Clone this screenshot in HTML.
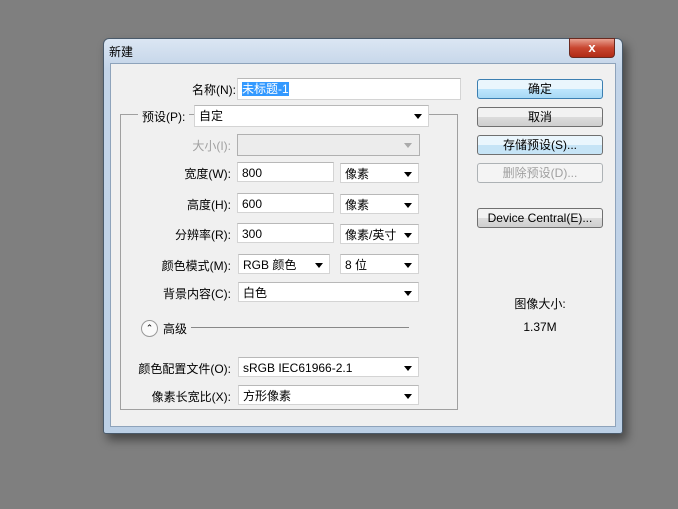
<!DOCTYPE html><html><head><meta charset="utf-8"><style>
body{margin:0;width:678px;height:509px;background:#7f7f7f;position:relative;overflow:hidden;font-family:"Liberation Sans","Noto Sans CJK SC",sans-serif;font-size:12px;color:#000}
.a{position:absolute}
.win{left:103px;top:38px;width:518px;height:394px;background:linear-gradient(#dbe6f3,#c3d4e8 30px,#bcd0e6);border:1px solid #4a5a6a;border-radius:6px 6px 3px 3px;box-shadow:4px 6px 10px rgba(0,0,0,.45)}
.in{left:6px;top:24px;width:504px;height:362px;background:#f0f0f0;border:1px solid #8ea3bb}
.l{text-align:right;width:120px}
.f{background:#fff;border:1px solid #d4d4d4;border-top-color:#b8b8b8;height:20px;line-height:20px;padding-left:4px;box-sizing:border-box}
.f.dd::after{content:"";position:absolute;right:6px;top:8px;border:4px solid transparent;border-top:5px solid #000;border-bottom:0}
.b{width:124px;height:18px;border:1px solid #707070;border-radius:3px;background:linear-gradient(#f2f2f2 50%,#dcdcdc 50%,#cfcfcf);text-align:center;line-height:18px;box-sizing:content-box}
</style></head><body>
<div class="a win">
 <div class="a" style="left:5px;top:4px">新建</div>
 <div class="a" style="left:465px;top:-1px;width:44px;height:18px;background:linear-gradient(#e8a090,#c8452f 50%,#b02a15);border:1px solid #6a2a20;border-radius:0 0 4px 4px;color:#fff;font-weight:bold;text-align:center;line-height:17px;font-size:13px">x</div>
 <div class="a in"></div>
</div>
<div class="a" style="left:120px;top:114px;width:336px;height:294px;border:1px solid #a0a0a0"></div>
<div class="a l" style="left:116px;top:81px">名称(N):</div>
<div class="a f" style="left:237px;top:78px;width:224px;height:22px"><span style="background:#3399ff;color:#fff">未标题-1</span></div>
<div class="a" style="left:138px;top:108px;background:#f0f0f0;padding:0 4px">预设(P):</div>
<div class="a f dd" style="left:194px;top:105px;width:235px;height:22px">自定</div>
<div class="a l" style="left:111px;top:137px;color:#a0a0a0">大小(I):</div>
<div class="a" style="left:237px;top:134px;width:181px;height:20px;border:1px solid #b0b0b0;background:#ececec"></div>
<div class="a" style="left:404px;top:143px;border:4px solid transparent;border-top:5px solid #aaa"></div>
<div class="a l" style="left:111px;top:165px">宽度(W):</div>
<div class="a f" style="left:237px;top:162px;width:97px">800</div>
<div class="a f dd" style="left:340px;top:163px;width:79px">像素</div>
<div class="a l" style="left:111px;top:196px">高度(H):</div>
<div class="a f" style="left:237px;top:193px;width:97px">600</div>
<div class="a f dd" style="left:340px;top:194px;width:79px">像素</div>
<div class="a l" style="left:111px;top:226px">分辨率(R):</div>
<div class="a f" style="left:237px;top:223px;width:97px">300</div>
<div class="a f dd" style="left:340px;top:224px;width:79px">像素/英寸</div>
<div class="a l" style="left:111px;top:257px">颜色模式(M):</div>
<div class="a f dd" style="left:238px;top:254px;width:92px">RGB 颜色</div>
<div class="a f dd" style="left:340px;top:254px;width:79px">8 位</div>
<div class="a l" style="left:111px;top:285px">背景内容(C):</div>
<div class="a f dd" style="left:238px;top:282px;width:181px">白色</div>
<div class="a" style="left:141px;top:320px;width:15px;height:15px;border-radius:50%;border:1px solid #999;background:#fafafa;font-size:9px;text-align:center;line-height:14px">⌃</div>
<div class="a" style="left:163px;top:320px">高级</div>
<div class="a" style="left:191px;top:327px;width:218px;border-top:1px solid #888"></div>
<div class="a l" style="left:111px;top:360px">颜色配置文件(O):</div>
<div class="a f dd" style="left:238px;top:357px;width:181px">sRGB IEC61966-2.1</div>
<div class="a l" style="left:111px;top:388px">像素长宽比(X):</div>
<div class="a f dd" style="left:238px;top:385px;width:181px">方形像素</div>
<div class="a b" style="left:477px;top:79px;border-color:#3c7fb1;background:linear-gradient(#eaf6fd 50%,#bee6fd 50%,#a7d9f5)">确定</div>
<div class="a b" style="left:477px;top:107px">取消</div>
<div class="a b" style="left:477px;top:135px;background:linear-gradient(#eaf6fd 50%,#c6e4f6 50%)">存储预设(S)...</div>
<div class="a b" style="left:477px;top:163px;border-color:#adb2b5;background:#f4f4f4;color:#a0a0a0">删除预设(D)...</div>
<div class="a b" style="left:477px;top:208px">Device Central(E)...</div>
<div class="a" style="left:477px;top:295px;width:126px;text-align:center">图像大小:</div>
<div class="a" style="left:477px;top:320px;width:126px;text-align:center">1.37M</div>
</body></html>
